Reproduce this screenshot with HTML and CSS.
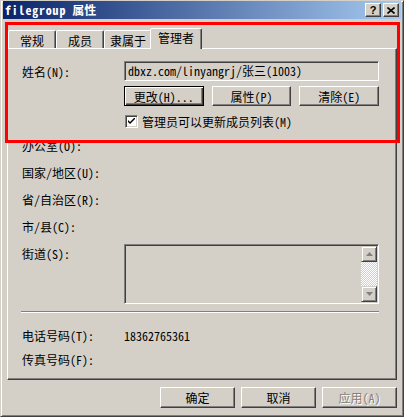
FILE: index.html
```html
<!DOCTYPE html>
<html lang="zh-CN">
<head>
<meta charset="utf-8">
<title>filegroup 属性</title>
<link rel="stylesheet" href="styles.css">
</head>
<body>
<div class="window">
  <div class="titlebar">
    <span class="title"><span class="title-lat">filegroup</span> 属性</span>
    <div class="tbtns">
      <div class="tbtn help">?</div>
      <div class="tbtn close">
        <svg width="8" height="7" viewBox="0 0 8 7"><path d="M0.5 0.5 L7.5 6.5 M7.5 0.5 L0.5 6.5" stroke="#000" stroke-width="1.6"/></svg>
      </div>
    </div>
  </div>

  <div class="main">
    <div class="tabstrip">
      <div class="tab">常规</div>
      <div class="tab">成员</div>
      <div class="tab">隶属于</div>
      <div class="tab selected">管理者</div>
    </div>
    <div class="panel">
      <div class="row name-row">
        <span class="label">姓名(N):</span>
        <div class="field">dbxz.com/linyangrj/张三(1003)</div>
      </div>
      <div class="row btn-row">
        <span class="label"></span>
        <div class="btns3">
          <div class="btn default">更改(H)...</div>
          <div class="btn">属性(P)</div>
          <div class="btn">清除(E)</div>
        </div>
      </div>
      <div class="row check-row">
        <span class="label"></span>
        <div class="check-wrap">
          <span class="checkbox">
            <svg width="7" height="7" viewBox="0 0 7 7"><path d="M0 2 L0 4 L2 6 L7 1 L7 -1 L2 4 Z" fill="#000"/></svg>
          </span>
          <span>管理员可以更新成员列表(M)</span>
        </div>
      </div>
      <div class="row line-row first"><span class="label">办公室(O):</span></div>
      <div class="row line-row"><span class="label">国家/地区(U):</span></div>
      <div class="row line-row"><span class="label">省/自治区(R):</span></div>
      <div class="row line-row"><span class="label">市/县(C):</span></div>
      <div class="row street-row">
        <span class="label">街道(S):</span>
        <div class="textarea">
          <div class="ta-body"></div>
          <div class="scrollbar">
            <div class="sbtn"><svg width="7" height="4" viewBox="0 0 7 4"><path d="M3.5 0 L7 4 L0 4 Z" fill="#808080"/></svg></div>
            <div class="track"></div>
            <div class="sbtn"><svg width="7" height="4" viewBox="0 0 7 4"><path d="M0 0 L7 0 L3.5 4 Z" fill="#808080"/></svg></div>
          </div>
        </div>
      </div>
      <div class="separator"></div>
      <div class="row phone-row first-phone">
        <span class="label">电话号码(T):</span>
        <span class="value">18362765361</span>
      </div>
      <div class="row phone-row">
        <span class="label">传真号码(F):</span>
      </div>
    </div>
    <div class="footer">
      <div class="btn wide">确定</div>
      <div class="btn wide">取消</div>
      <div class="btn wide disabled">应用(A)</div>
    </div>
  </div>
  <div class="annotation"></div>
</div>
</body>
</html>
```

FILE: styles.css
```css
* { box-sizing: border-box; }

html, body {
  margin: 0;
  padding: 0;
  background: #d4d0c8;
}

body {
  font-family: "Noto Sans Mono CJK SC", "Noto Sans CJK SC", "DejaVu Sans Mono", monospace;
  font-size: 12px;
  color: #000;
}

.window {
  position: relative;
  width: 404px;
  height: 417px;
  background: #d4d0c8;
  border: 1px solid;
  border-color: #d4d0c8 #404040 #404040 #d4d0c8;
  box-shadow: inset 1px 1px #fff, inset -1px -1px #808080;
  padding: 0 2px 2px 2px;
}

.titlebar {
  height: 18px;
  background: linear-gradient(to right, #0a246a, #a6caf0);
  display: flex;
  align-items: center;
  padding: 0 2px 0 2px;
  color: #fff;
}

.title {
  font-weight: bold;
  font-size: 12px;
  line-height: 14px;
}

.title-lat { letter-spacing: 0.8px; }

.tbtns {
  margin-left: auto;
  display: flex;
  gap: 2px;
}

.tbtn {
  width: 16px;
  height: 14px;
  background: #d4d0c8;
  border: 1px solid;
  border-color: #fff #404040 #404040 #fff;
  box-shadow: inset -1px -1px #808080;
  display: flex;
  align-items: center;
  justify-content: center;
  color: #000;
  font-family: "Liberation Sans", sans-serif;
  font-weight: bold;
  font-size: 11px;
  line-height: 12px;
}

.main {
  padding: 9px 4px 0 4px;
}

.tabstrip {
  display: flex;
  align-items: flex-end;
  height: 20px;
  padding-left: 1px;
}

.tab {
  width: 48px;
  height: 18px;
  border: 1px solid;
  border-bottom: none;
  border-color: #fff #404040 transparent #fff;
  box-shadow: inset -1px 0 #808080;
  border-radius: 2px 2px 0 0;
  text-align: center;
  line-height: 18px;
  padding-top: 1px;
  background: #d4d0c8;
}

.tab.selected {
  width: 52px;
  height: 21px;
  margin: 0 -2px -1px -2px;
  padding-top: 0;
  line-height: 18px;
  position: relative;
  z-index: 2;
}

.panel {
  height: 332px;
  border: 1px solid;
  border-color: #fff #404040 #404040 #fff;
  box-shadow: inset -1px -1px #808080;
  padding: 12px 0 0 14px;
}

.row {
  display: flex;
  align-items: center;
}

.label {
  width: 102px;
  flex: none;
  white-space: nowrap;
}

.field {
  width: 255px;
  height: 20px;
  border: 1px solid;
  border-color: #808080 #fff #fff #808080;
  box-shadow: inset 1px 1px #404040, inset -1px -1px #d4d0c8;
  padding: 0 0 0 3px;
  line-height: 18px;
  white-space: nowrap;
}

.btn-row { margin-top: 5px; }

.btns3 {
  width: 255px;
  display: flex;
  gap: 8px;
}

.btn {
  flex: 1;
  height: 20px;
  background: #d4d0c8;
  border: 1px solid;
  border-color: #fff #404040 #404040 #fff;
  box-shadow: inset -1px -1px #808080;
  display: flex;
  align-items: center;
  justify-content: center;
  white-space: nowrap;
}

.btn.default {
  border-color: #000;
  box-shadow: inset 1px 1px #fff, inset -1px -1px #404040, inset -2px -2px #808080;
}

.check-row {
  margin-top: 9px;
  height: 13px;
}

.check-wrap {
  display: flex;
  align-items: center;
  gap: 4px;
  margin-left: 1px;
}

.checkbox {
  width: 13px;
  height: 13px;
  background: #fff;
  border: 1px solid;
  border-color: #808080 #fff #fff #808080;
  box-shadow: inset 1px 1px #404040, inset -1px -1px #d4d0c8;
  display: flex;
  align-items: center;
  justify-content: center;
}

.line-row { height: 27px; }
.line-row.first { margin-top: 4px; }

.street-row {
  align-items: flex-start;
  margin-top: 4px;
}

.street-row .label { padding-top: 1px; }

.textarea {
  width: 255px;
  height: 60px;
  display: flex;
  border: 1px solid;
  border-color: #808080 #fff #fff #808080;
  box-shadow: inset 1px 1px #404040, inset -1px -1px #d4d0c8;
  padding: 1px 1px 1px 1px;
}

.ta-body { flex: 1; }

.scrollbar {
  width: 16px;
  display: flex;
  flex-direction: column;
}

.sbtn {
  height: 16px;
  background: #d4d0c8;
  border: 1px solid;
  border-color: #d4d0c8 #404040 #404040 #d4d0c8;
  box-shadow: inset 1px 1px #fff, inset -1px -1px #808080;
  display: flex;
  align-items: center;
  justify-content: center;
}

.track {
  flex: 1;
  background: repeating-conic-gradient(#fff 0 25%, #d4d0c8 0 50%) 0 0 / 2px 2px;
}

.separator {
  width: 358px;
  margin: 7px 0 0 -1px;
  height: 2px;
  border-top: 1px solid #808080;
  border-bottom: 1px solid #fff;
}

.phone-row { height: 24px; }
.phone-row.first-phone { margin-top: 10px; }

.footer {
  display: flex;
  justify-content: flex-end;
  gap: 6px;
  margin-top: 7px;
}

.btn.wide {
  flex: none;
  width: 75px;
  height: 21px;
}

.btn.disabled {
  color: #808080;
  text-shadow: 1px 1px #fff;
}

.annotation {
  position: absolute;
  left: 4px;
  top: 21px;
  width: 395px;
  height: 121px;
  border: 3px solid #ff0000;
  pointer-events: none;
}
```
